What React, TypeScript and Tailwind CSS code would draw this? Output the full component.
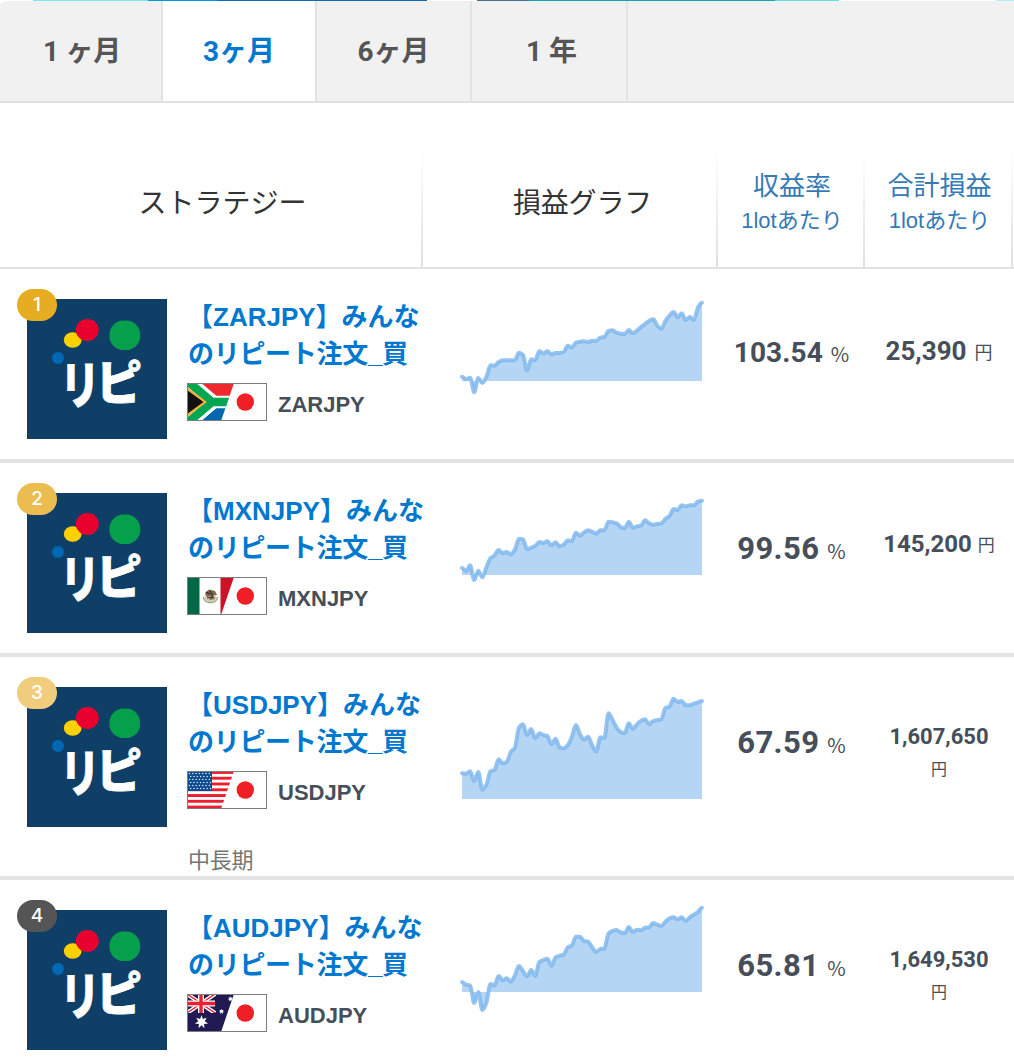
import type { ReactNode } from "react";

interface Strategy {
  rank: number;
  pair: string;
  badge: string;
  rate: string;
  rateClass: string;
  profit: string;
  profitClass: string;
  yenClass: string;
  baseline: number;
  points: number[];
  zero: number;
  rowClass: string;
  term?: string;
  flag: ReactNode;
}

const CHART_WIDTH = 240;
const CHART_SCALE = 3;

// Smooth line through the samples, flat at every local peak and dip.
function linePath(points: number[], zero: number, baseline: number) {
  const step = CHART_WIDTH / (points.length - 1);
  const ys = points.map((p) => baseline + (p - zero) / CHART_SCALE);
  const slope = ys.map((y, i) => {
    if (i === 0 || i === ys.length - 1) return 0;
    const before = y - ys[i - 1];
    const after = ys[i + 1] - y;
    return before * after <= 0 ? 0 : (2 * before * after) / (before + after);
  });
  let d = `M0 ${ys[0].toFixed(2)}`;
  for (let i = 1; i < ys.length; i++) {
    const x0 = (i - 1) * step;
    const x1 = i * step;
    d += `C${(x0 + step / 3).toFixed(2)} ${(ys[i - 1] + slope[i - 1] / 3).toFixed(2)} ${(x1 - step / 3).toFixed(2)} ${(ys[i] - slope[i] / 3).toFixed(2)} ${x1.toFixed(2)} ${ys[i].toFixed(2)}`;
  }
  return d;
}

function ProfitChart({ points, zero, baseline }: Pick<Strategy, "points" | "zero" | "baseline">) {
  const line = linePath(points, zero, baseline);
  return (
    <svg width="240" height="150" className="block overflow-visible">
      <path d={`${line}L240 ${baseline}L0 ${baseline}Z`} fill="#7cb5ec" fillOpacity="0.57" />
      <path d={line} fill="none" stroke="#7cb5ec" strokeOpacity="0.8" strokeWidth="4" strokeLinecap="round" strokeLinejoin="round" />
    </svg>
  );
}

function Logo() {
  return (
    <svg width="140" height="140" viewBox="0 0 140 140" className="block">
      <rect width="140" height="140" fill="#0f3f67" />
      <ellipse cx="45.7" cy="41" rx="8.9" ry="7.8" fill="#fdd000" />
      <ellipse cx="60.3" cy="31" rx="11.5" ry="11" fill="#e8002f" />
      <rect x="82.4" y="21.5" width="30.8" height="29.6" rx="14.2" fill="#06a04d" />
      <circle cx="31" cy="59" r="6" fill="#0068b7" />
      <g fill="#fff" stroke="#fff" strokeWidth="0.8" fontFamily="'Noto Sans CJK JP', sans-serif" fontWeight="900" fontSize="50">
        <text transform="translate(33.5 105.2) scale(0.78 1.02)">リ</text>
        <text transform="translate(69 101.2) scale(0.92 0.96)">ピ</text>
      </g>
    </svg>
  );
}

function star(cx: number, cy: number, r: number, tips = 7) {
  return Array.from({ length: tips * 2 }, (_, i) => {
    const a = (Math.PI * i) / tips - Math.PI / 2;
    const q = i % 2 ? r * 0.48 : r;
    return `${(cx + Math.cos(a) * q).toFixed(2)},${(cy + Math.sin(a) * q).toFixed(2)}`;
  }).join(" ");
}

function SouthAfrica() {
  return (
    <>
      <rect width="60" height="19" fill="#ee2a2f" />
      <rect y="19" width="60" height="19" fill="#0067b3" />
      <path d="M0 -4L27 19L0 42M27 19H60" fill="none" stroke="#fff" strokeWidth="12.5" />
      <path d="M-2 -4L25 19L-2 42M25 19H60" fill="none" stroke="#00a651" strokeWidth="8.4" />
      <path d="M0 4L20 19L0 34Z" fill="#fbb040" />
      <path d="M0 7L16.5 19L0 31Z" fill="#111" />
    </>
  );
}

function Mexico() {
  return (
    <>
      <rect width="60" height="38" fill="#fff" />
      <rect width="12.5" height="38" fill="#006847" />
      <rect x="33.5" width="26" height="38" fill="#ce1126" />
      <ellipse cx="23.5" cy="19.5" rx="6" ry="5.5" fill="#d5cbb8" />
      <path d="M16.5 20C17 27.5 30 27.5 30.5 20" fill="none" stroke="#8fa878" strokeWidth="1.4" />
      <path d="M18 16L22 12.5L28 14L30 18L26 18L28 22L22 23L24 19L20 20Z" fill="#806548" />
      <path d="M19 15L23 17M23 14L26 19M20 21L26 20" stroke="#332a22" strokeWidth="1.1" />
    </>
  );
}

function UnitedStates() {
  return (
    <>
      <rect width="60" height="38" fill="#fff" />
      {[0, 1, 2, 3, 4, 5, 6].map((n) => (
        <rect key={n} y={n * 5.77} width="60" height="2.9" fill="#ee1f2c" />
      ))}
      <rect width="25" height="20" fill="#0a4a8f" />
      {Array.from({ length: 42 }, (_, n) => (
        <circle key={n} cx={2.5 + (n % 7) * 3.3 + (Math.floor(n / 7) % 2) * 1.2} cy={2.5 + Math.floor(n / 7) * 3} r="0.8" fill="#d8e4f0" />
      ))}
    </>
  );
}

function Australia() {
  return (
    <>
      <rect width="60" height="38" fill="#211a52" />
      <path d="M0 0L28 19M28 0L0 19" stroke="#fff" strokeWidth="4" />
      <path d="M0 0L28 19M28 0L0 19" stroke="#ee1f2c" strokeWidth="1.4" />
      <path d="M14 0V19M0 9.5H28" stroke="#fff" strokeWidth="6" />
      <path d="M14 0V19M0 9.5H28" stroke="#ee1f2c" strokeWidth="3.4" />
      <rect y="19" width="30" height="19" fill="#211a52" />
      <polygon points={star(14.5, 28, 6.8)} fill="#fff" />
      <polygon points={star(34.5, 17.5, 2.8)} fill="#fff" />
      <polygon points={star(43.5, 5, 2.8)} fill="#fff" />
    </>
  );
}

function PairFlag({ pair, children }: { pair: string; children: ReactNode }) {
  return (
    <svg width="80" height="38" viewBox="0 0 80 38" className="block">
      <clipPath id={`flag-${pair}`}>
        <path d="M0 0H47L34 38H0Z" />
      </clipPath>
      <rect width="80" height="38" fill="#fff" />
      <g clipPath={`url(#flag-${pair})`}>{children}</g>
      <circle cx="58.3" cy="19" r="8.7" fill="#f01f26" />
      <rect x="0.5" y="0.5" width="79" height="37" fill="none" stroke="#7d7d7d" />
    </svg>
  );
}

const strategies: Strategy[] = [
  {
    rank: 1, pair: "ZARJPY", badge: "bg-[#e6ad23]", rowClass: "h-[194px]",
    rate: "103.54", rateClass: "pt-16 text-[28px] tracking-[0.1px]",
    profit: "25,390", profitClass: "pt-[62px] text-[26px]", yenClass: "ml-2 align-[1px] text-[18px]",
    baseline: 112, zero: 288, flag: <SouthAfrica />,
    points: [275, 283, 278, 322, 279, 294, 276, 241, 242, 231, 226, 226, 226, 225, 203, 210, 256, 223, 226, 198, 205, 199, 208, 204, 204, 201, 182, 188, 173, 170, 169, 171, 167, 168, 158, 156, 138, 136, 143, 146, 147, 135, 145, 137, 126, 117, 108, 103, 122, 131, 108, 92, 81, 97, 85, 105, 96, 105, 68, 53],
  },
  {
    rank: 2, pair: "MXNJPY", badge: "bg-[#ebbd50]", rowClass: "h-[194px]",
    rate: "99.56", rateClass: "pt-[66px] text-[31px] tracking-[0.4px]",
    profit: "145,200", profitClass: "pt-[61px] text-[24px]", yenClass: "ml-1.5 align-[1px] text-[17px]",
    baseline: 112, zero: 269, flag: <Mexico />,
    points: [248, 257, 240, 284, 256, 276, 246, 219, 210, 194, 204, 200, 207, 193, 160, 162, 192, 187, 182, 170, 173, 168, 180, 171, 183, 178, 165, 167, 142, 151, 141, 135, 139, 145, 135, 135, 109, 111, 114, 125, 129, 109, 127, 123, 121, 105, 114, 118, 116, 114, 101, 92, 71, 74, 60, 63, 60, 60, 49, 46],
  },
  {
    rank: 3, pair: "USDJPY", badge: "bg-[#f0cc7d]", rowClass: "h-[223px]",
    rate: "67.59", rateClass: "pt-[66px] text-[31px] tracking-[0.4px]",
    profit: "1,607,650", profitClass: "pt-[60px] text-[22px]", yenClass: "mt-px block text-[16px]",
    baseline: 142, zero: 341, term: "中長期", flag: <UnitedStates />,
    points: [264, 265, 258, 287, 260, 313, 298, 258, 254, 222, 234, 230, 200, 187, 127, 117, 149, 131, 159, 144, 149, 152, 177, 160, 186, 189, 180, 155, 119, 147, 163, 154, 180, 198, 156, 158, 84, 103, 127, 140, 144, 114, 131, 117, 107, 102, 117, 107, 104, 102, 68, 64, 40, 50, 47, 60, 60, 55, 51, 47],
  },
  {
    rank: 4, pair: "AUDJPY", badge: "bg-[#555]", rowClass: "h-[194px]",
    rate: "65.81", rateClass: "pt-[66px] text-[31px] tracking-[0.4px]",
    profit: "1,649,530", profitClass: "pt-[60px] text-[22px]", yenClass: "mt-px block text-[16px]",
    baseline: 112, zero: 290, flag: <Australia />,
    points: [260, 268, 270, 323, 290, 344, 322, 266, 270, 242, 255, 249, 259, 240, 212, 228, 243, 224, 242, 200, 194, 190, 211, 186, 181, 178, 156, 151, 124, 124, 137, 139, 156, 170, 161, 160, 115, 107, 104, 111, 114, 95, 110, 103, 105, 97, 96, 83, 88, 92, 79, 69, 66, 72, 66, 77, 66, 58, 50, 37],
  },
];

function StrategyRow({ item }: { item: Strategy }) {
  return (
    <div className={`flex border-b-4 border-[#e3e3e3] ${item.rowClass}`}>
      <div className="flex w-[462px] shrink-0 pt-[30px] pl-[27px]">
        <div className="relative h-[140px] w-[140px] shrink-0">
          <Logo />
          <span className={`absolute -top-2.5 -left-2.5 flex h-8 w-10 items-center justify-center rounded-2xl font-['Inter','Noto_Sans_CJK_JP',sans-serif] text-[19px] font-medium text-white ${item.badge}`}>{item.rank}</span>
        </div>
        <div className="ml-5 w-[260px]">
          <h3 className="text-[26px] leading-[37px] font-bold whitespace-nowrap text-[#0078cf]">
            【{item.pair}】みんな<br /><span className="pl-px tracking-[-0.3px]">のリピート注文_買</span>
          </h3>
          <div className="mt-2.5 flex items-center gap-[11px]">
            <PairFlag pair={item.pair}>{item.flag}</PairFlag>
            <span className="pt-[5px] text-[22px] leading-none font-bold text-[#464f59]">{item.pair}</span>
          </div>
          {item.term && <p className="mt-9 pl-px text-[22px] leading-8 tracking-[-0.2px] text-[#757575]">{item.term}</p>}
        </div>
      </div>
      <div className="w-[256px] shrink-0">
        <ProfitChart points={item.points} zero={item.zero} baseline={item.baseline} />
      </div>
      <div className={`w-[147px] shrink-0 text-center font-['Roboto','Noto_Sans_CJK_JP',sans-serif] leading-10 font-bold whitespace-nowrap ${item.rateClass}`}>
        {item.rate}<span className="ml-2 font-['Noto_Sans_CJK_JP',sans-serif] text-[20px] leading-none font-normal tracking-normal">%</span>
      </div>
      <div className={`w-[148px] shrink-0 text-center font-['Roboto','Noto_Sans_CJK_JP',sans-serif] leading-10 font-bold whitespace-nowrap ${item.profitClass}`}>
        {item.profit}<span className={`leading-6 font-normal ${item.yenClass}`}>円</span>
      </div>
    </div>
  );
}

function Divider() {
  return <div className="h-[118px] w-0.5 shrink-0 bg-linear-to-b from-white to-[#e0e0e0]" />;
}

export default function App() {
  return (
    <div className="h-[1062px] w-[1014px] overflow-hidden bg-white font-['Liberation_Sans','Noto_Sans_CJK_JP',sans-serif] text-[#464f59]">
      <div className="flex h-px">
        <div className="w-[33px] bg-white" />
        <div className="w-[115px] bg-[#7de5ef]" />
        <div className="w-[70px] bg-[#0099dc]" />
        <div className="w-[209px] bg-[#1268b3]" />
        <div className="w-[50px] bg-white" />
        <div className="w-[52px] bg-[#427396]" />
        <div className="w-[246px] bg-[#16a5b8]" />
        <div className="w-[64px] bg-[#64dce8]" />
        <div className="w-[157px] bg-white" />
        <div className="w-[18px] bg-[#b0eef8]" />
      </div>
      <nav className="flex h-[102px] rounded-tl-md border-b-2 border-[#e1e1e1] bg-[#f1f1f1] font-['Roboto','Noto_Sans_CJK_JP',sans-serif] text-[28px] leading-none font-bold text-[#555]">
        <div className="flex w-[163px] items-center justify-center border-r-2 border-[#e3e3e3] pt-0.5 pl-[3px]"><span className="tracking-[-0.3px]">1 ヶ月</span></div>
        <div className="flex w-[154px] items-center justify-center border-r-2 border-[#e3e3e3] bg-white pt-0.5 text-[#0078cf]"><span>3ヶ月</span></div>
        <div className="flex w-[155px] items-center justify-center border-r-2 border-[#e3e3e3] pt-0.5"><span>6ヶ月</span></div>
        <div className="flex w-[156px] items-center justify-center border-r-2 border-[#e3e3e3] pt-0.5 pl-[5px]"><span>1 年</span></div>
      </nav>
      <div className="flex h-[166px] items-end border-b-2 border-[#e1e1e1] text-center text-[#333]">
        <div className="h-[83px] w-[421px] pl-6 text-[28px] leading-10">ストラテジー</div>
        <Divider />
        <div className="h-[83px] w-[293px] pr-[16px] pl-[42px] text-[28px] leading-10 tracking-[-0.2px] whitespace-nowrap">損益グラフ</div>
        <Divider />
        <div className="h-[97px] w-[145px] pl-[3px] text-[26px] leading-[33px] text-[#337ab7]">収益率<br /><span className="text-[22px]">1lotあたり</span></div>
        <Divider />
        <div className="h-[97px] w-[146px] pl-[3px] text-[26px] leading-[33px] text-[#337ab7]">合計損益<br /><span className="text-[22px]">1lotあたり</span></div>
        <Divider />
      </div>
      {strategies.map((item) => (
        <StrategyRow key={item.rank} item={item} />
      ))}
    </div>
  );
}
